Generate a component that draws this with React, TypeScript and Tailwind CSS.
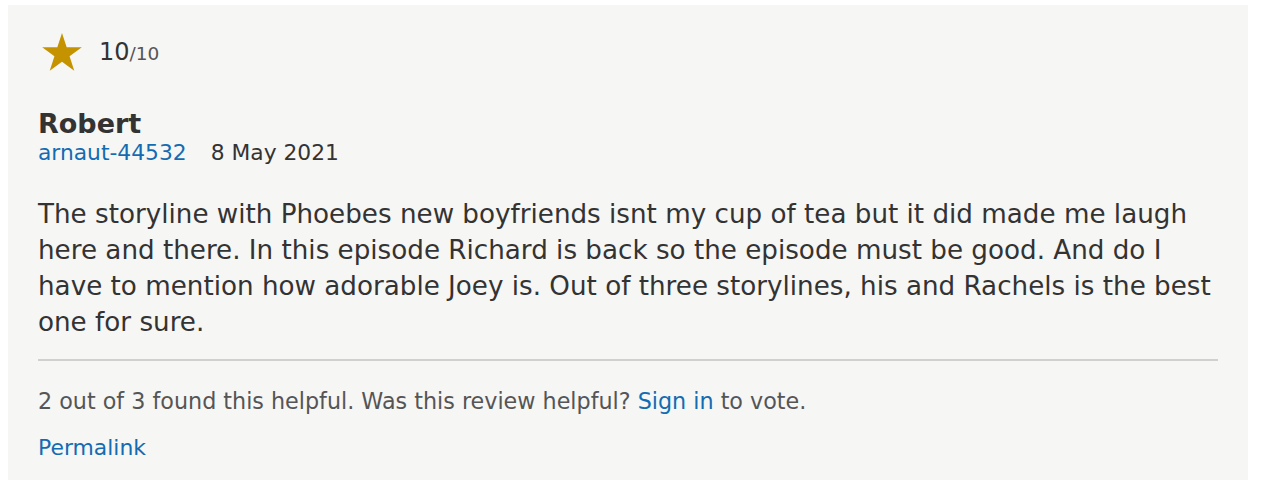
export default function App() {
  return (
    <div className="min-h-screen bg-white pt-[5px] pl-[8px]" style={{ fontFamily: '"DejaVu Sans", Verdana, sans-serif' }}>
      <div className="w-[1240px] h-[475px] bg-[#f6f6f5] px-[30px] pt-[28px] text-[#333333]">
        <div className="flex items-center gap-[17px] h-[38px]">
          <svg width="40" height="38" viewBox="0 0 24 23" className="ml-[4px]">
            <path d="M12 0l2.83 8.7H24l-7.42 5.38 2.84 8.72L12 17.42 4.58 22.8l2.84-8.72L0 8.7h9.17z" fill="#c59200" />
          </svg>
          <div className="flex items-baseline leading-none">
            <span className="text-[24px]">10</span>
            <span className="text-[18.5px] text-[#555]">/10</span>
          </div>
        </div>

        <div className="mt-[37px] text-[27px] font-bold leading-[32px]">Robert</div>
        <div className="flex gap-[24px] text-[21.8px] leading-[26px]">
          <a className="text-[#136cb2]">arnaut-44532</a>
          <span>8 May 2021</span>
        </div>

        <p className="mt-[30px] w-[1188px] text-[26.2px] leading-[36px]">
          The storyline with Phoebes new boyfriends isnt my cup of tea but it did made me laugh here and there. In
          this episode Richard is back so the episode must be good. And do I have to mention how adorable Joey is.
          Out of three storylines, his and Rachels is the best one for sure.
        </p>

        <div className="mt-[19px] h-[2px] w-[1180px] bg-[#d0d0ce]" />

        <div className="mt-[27px] text-[22.25px] text-[#555] leading-[26px]">
          2 out of 3 found this helpful. Was this review helpful?{' '}
          <a className="text-[#136cb2]">Sign in</a> to vote.
        </div>
        <div className="mt-[21px] text-[21.9px] leading-[26px]">
          <a className="text-[#136cb2]">Permalink</a>
        </div>
      </div>
    </div>
  );
}
